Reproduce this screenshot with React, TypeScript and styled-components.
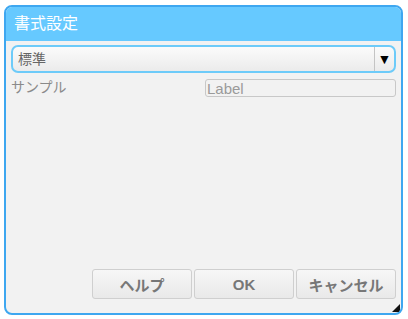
import styled, { createGlobalStyle } from 'styled-components';

const GlobalStyle = createGlobalStyle`
    html, body {
        margin: 0;
        padding: 0;
        background: #ffffff;
    }
    body {
        font-family: "Liberation Sans", "Noto Sans CJK JP", sans-serif;
    }
`;

const Dialog = styled.div`
    position: relative;
    box-sizing: border-box;
    width: 399px;
    height: 310px;
    margin: 5px 0 0 4px;
    border: 2px solid #3ea7f0;
    border-radius: 8px;
    background: #f2f2f2;
    overflow: hidden;
    display: flex;
    flex-direction: column;
`;

const Header = styled.div`
    height: 34px;
    flex: none;
    background: #66c9ff;
    color: #ffffff;
    font-size: 16px;
    line-height: 34px;
    padding-left: 8px;
`;

const Body = styled.div`
    flex: 1;
    display: flex;
    flex-direction: column;
    padding: 4px 5px 14px 5px;
`;

const Select = styled.div`
    box-sizing: border-box;
    height: 28px;
    border: 2px solid #6dcbf9;
    border-radius: 7px;
    background: linear-gradient(#fbfbfb, #ebebeb);
    display: flex;
    align-items: stretch;
`;

const SelectValue = styled.div`
    flex: 1;
    padding-left: 5px;
    font-size: 14px;
    line-height: 24px;
    color: #666666;
`;

const SelectArrow = styled.div`
    width: 19px;
    border-left: 1px solid #c4c4c4;
    display: flex;
    align-items: center;
    justify-content: center;
    color: #000000;
    font-size: 14px;
`;

const FieldRow = styled.div`
    margin-top: 6px;
    display: flex;
    align-items: flex-start;
    justify-content: space-between;
`;

const FieldLabel = styled.span`
    font-size: 14px;
    line-height: 16px;
    color: #8a8a8a;
`;

const TextInput = styled.input`
    box-sizing: border-box;
    width: 191px;
    height: 18px;
    margin: 0;
    padding: 0 1px;
    border: 1px solid #c8c8c8;
    border-radius: 3px;
    background: #f2f2f2;
    font-family: "Liberation Sans", sans-serif;
    font-size: 15px;
    color: #999999;
    outline: none;

    &::placeholder {
        color: #9a9a9a;
    }
`;

const Spacer = styled.div`
    flex: 1;
`;

const ButtonBar = styled.div`
    display: flex;
    justify-content: flex-end;
    gap: 2px;
`;

const Button = styled.button`
    box-sizing: border-box;
    width: 100px;
    height: 30px;
    margin: 0;
    padding: 0;
    border: 1px solid #cfcfcf;
    border-radius: 3px;
    background: linear-gradient(#f7f7f7, #e9e9e9);
    font-family: "Liberation Sans", "Noto Sans CJK JP", sans-serif;
    font-size: 15px;
    font-weight: 700;
    color: #777777;
`;

const Grip = styled.svg`
    position: absolute;
    right: 1px;
    bottom: 1px;
`;

export default function App() {
    return (
        <>
            <GlobalStyle />
            <Dialog>
                <Header>書式設定</Header>
                <Body>
                    <Select>
                        <SelectValue>標準</SelectValue>
                        <SelectArrow>▼</SelectArrow>
                    </Select>
                    <FieldRow>
                        <FieldLabel>サンプル</FieldLabel>
                        <TextInput placeholder="Label" readOnly />
                    </FieldRow>
                    <Spacer />
                    <ButtonBar>
                        <Button>ヘルプ</Button>
                        <Button>OK</Button>
                        <Button>キャンセル</Button>
                    </ButtonBar>
                </Body>
                <Grip width="8" height="8" viewBox="0 0 8 8">
                    <polygon points="8,0 8,8 0,8" fill="#111111" />
                </Grip>
            </Dialog>
        </>
    );
}
